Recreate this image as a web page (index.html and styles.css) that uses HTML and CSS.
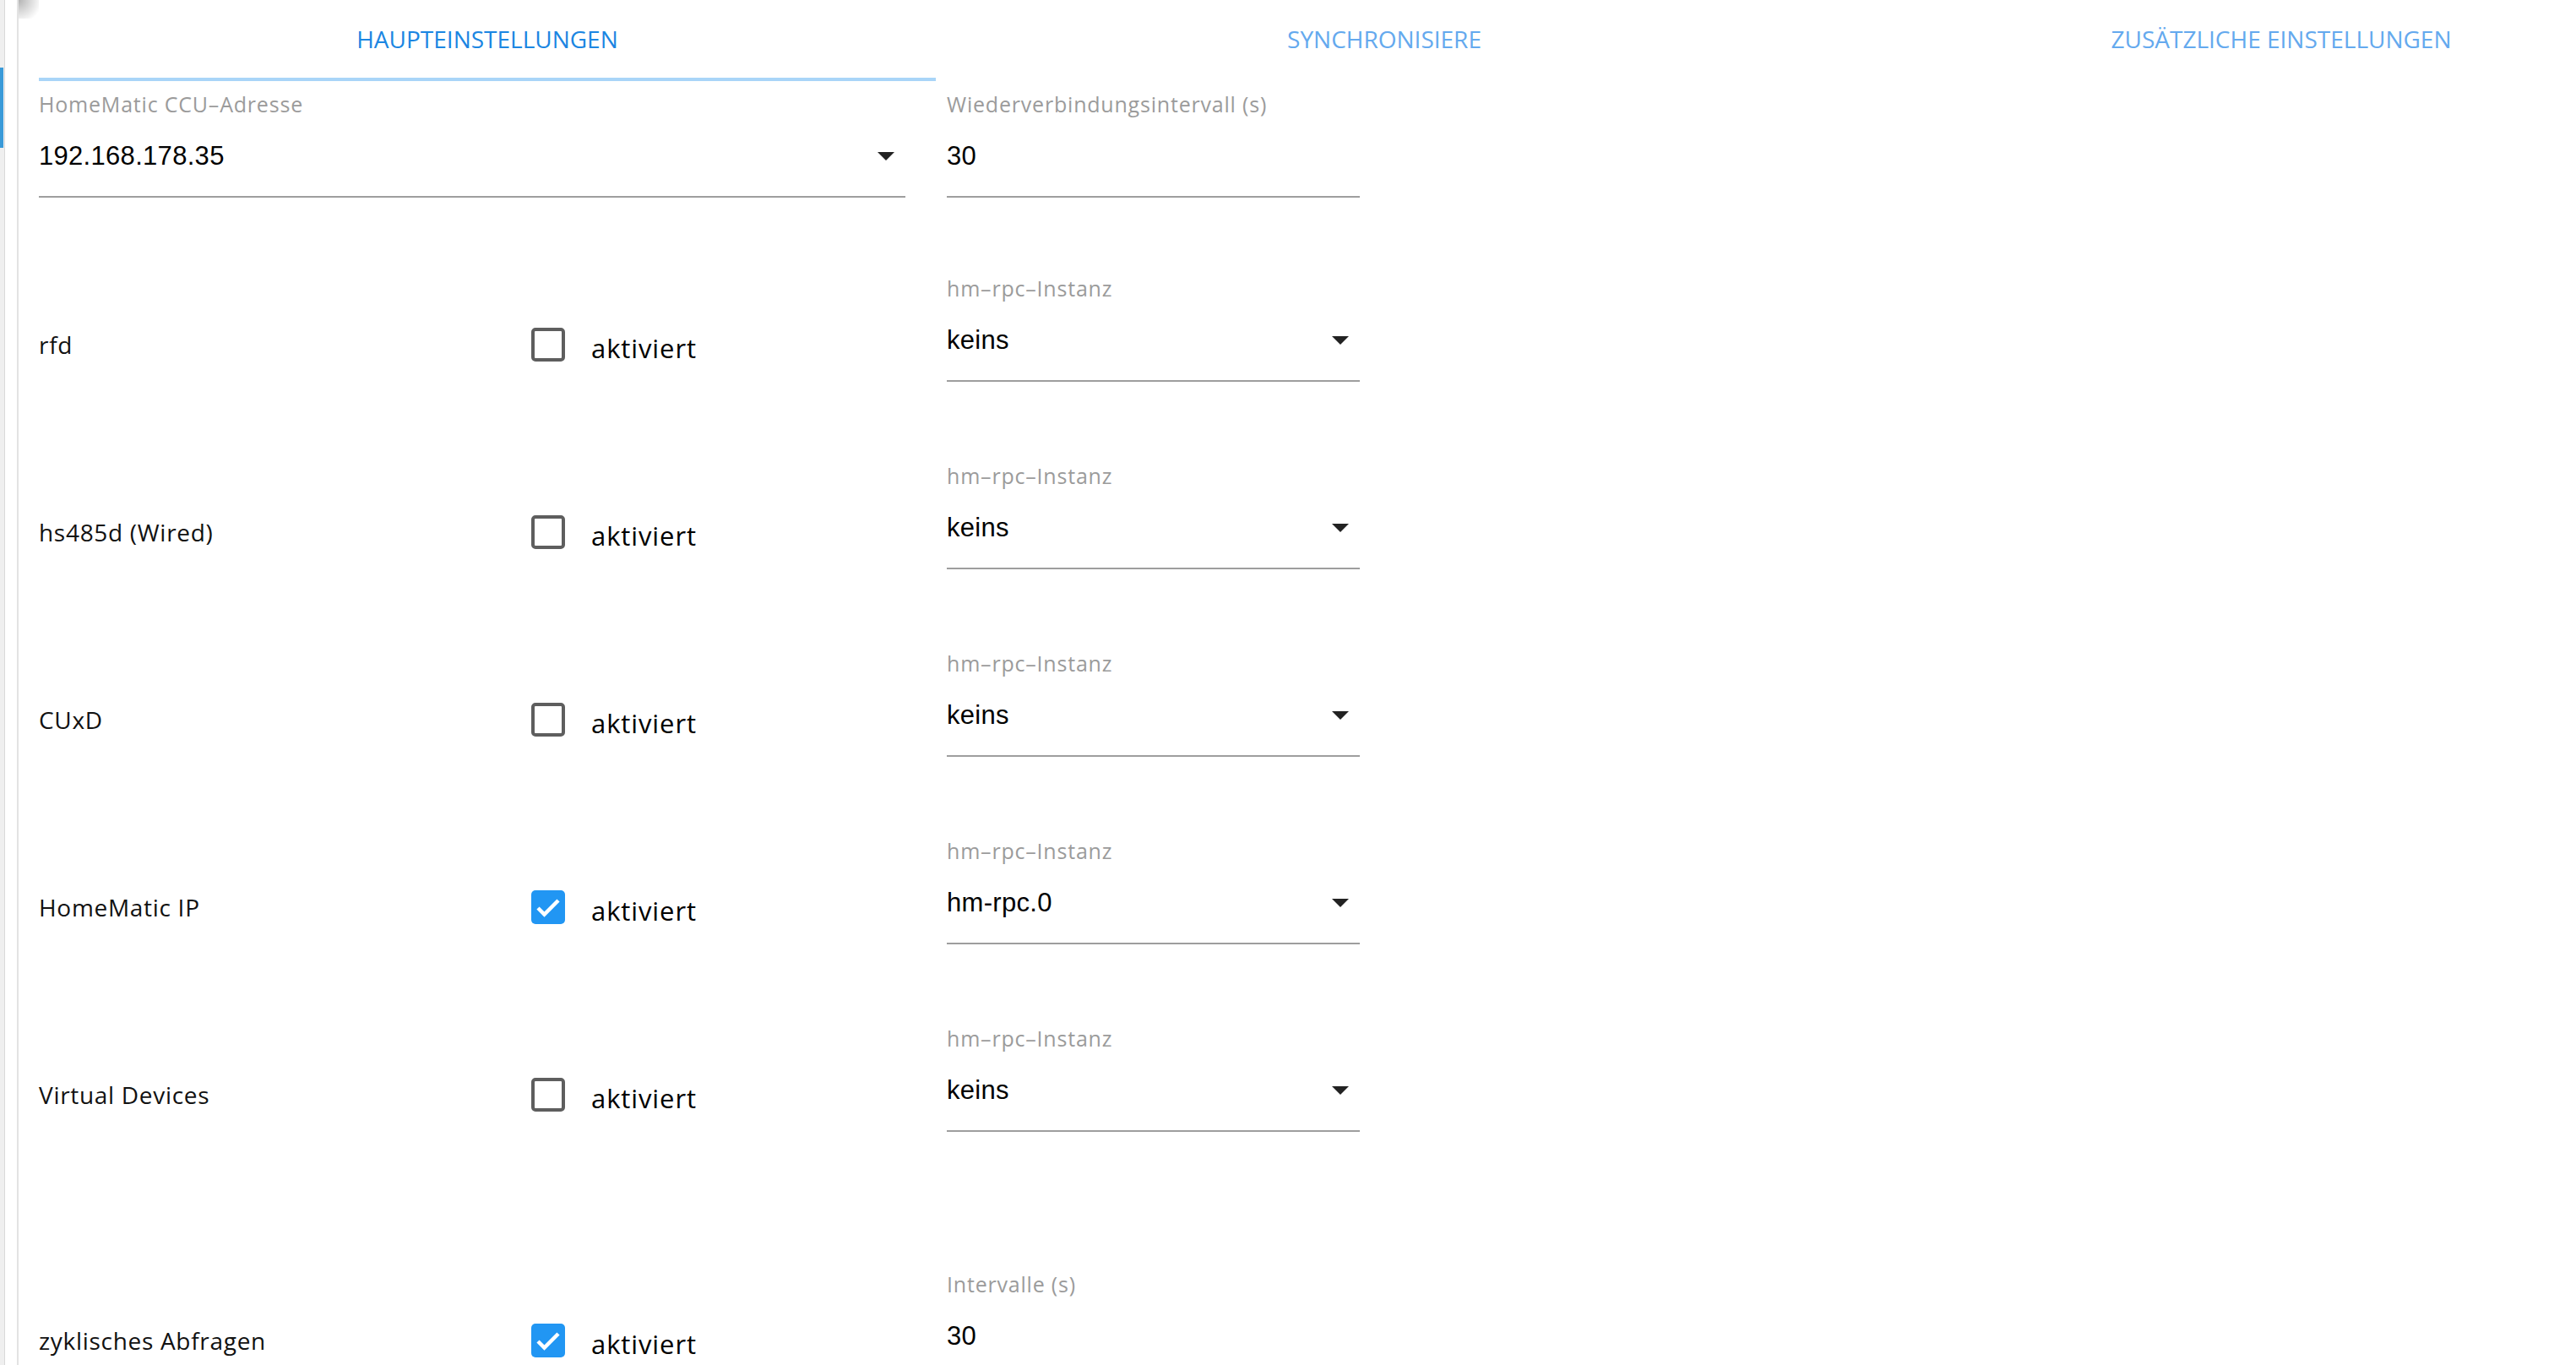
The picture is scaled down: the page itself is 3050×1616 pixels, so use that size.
FILE: index.html
```html
<!DOCTYPE html>
<html lang="de">
<head>
  <meta charset="UTF-8" />
  <meta name="viewport" content="width=device-width, initial-scale=1.0"/>
  <title>HomeMatic Einstellungen</title>
  <link rel="stylesheet" href="styles.css">
</head>
<body>

  <div class="app">
    <div class="rail"><span class="rail-marker"></span></div>

    <div class="panel">
      <span class="panel-shadow"></span>

      <div class="tabs">
        <div class="tab active">HAUPTEINSTELLUNGEN</div>
        <div class="tab">SYNCHRONISIERE</div>
        <div class="tab">ZUSÄTZLICHE EINSTELLUNGEN</div>
      </div>

      <div class="form">
        <div class="top-row">
          <div class="field">
            <div class="field-label">HomeMatic CCU–Adresse</div>
            <div class="field-input">
              <span>192.168.178.35</span>
              <svg class="arrow" viewBox="0 0 20 10"><path d="M0 0h20L10 10z"/></svg>
            </div>
          </div>
          <div class="field">
            <div class="field-label">Wiederverbindungsintervall (s)</div>
            <div class="field-input"><span>30</span></div>
          </div>
        </div>

        <div class="rows">
          <div class="row">
            <div class="row-name">rfd</div>
            <label class="row-check"><span class="box"></span><span class="check-text">aktiviert</span></label>
            <div class="field">
              <div class="field-label">hm–rpc–Instanz</div>
              <div class="field-input">
                <span>keins</span>
                <svg class="arrow" viewBox="0 0 20 10"><path d="M0 0h20L10 10z"/></svg>
              </div>
            </div>
          </div>

          <div class="row">
            <div class="row-name">hs485d (Wired)</div>
            <label class="row-check"><span class="box"></span><span class="check-text">aktiviert</span></label>
            <div class="field">
              <div class="field-label">hm–rpc–Instanz</div>
              <div class="field-input">
                <span>keins</span>
                <svg class="arrow" viewBox="0 0 20 10"><path d="M0 0h20L10 10z"/></svg>
              </div>
            </div>
          </div>

          <div class="row">
            <div class="row-name">CUxD</div>
            <label class="row-check"><span class="box"></span><span class="check-text">aktiviert</span></label>
            <div class="field">
              <div class="field-label">hm–rpc–Instanz</div>
              <div class="field-input">
                <span>keins</span>
                <svg class="arrow" viewBox="0 0 20 10"><path d="M0 0h20L10 10z"/></svg>
              </div>
            </div>
          </div>

          <div class="row">
            <div class="row-name">HomeMatic IP</div>
            <label class="row-check">
              <span class="box checked"><svg viewBox="0 0 40 40"><path d="M8 21l7.5 7.5L32 12"/></svg></span>
              <span class="check-text">aktiviert</span>
            </label>
            <div class="field">
              <div class="field-label">hm–rpc–Instanz</div>
              <div class="field-input">
                <span>hm-rpc.0</span>
                <svg class="arrow" viewBox="0 0 20 10"><path d="M0 0h20L10 10z"/></svg>
              </div>
            </div>
          </div>

          <div class="row">
            <div class="row-name">Virtual Devices</div>
            <label class="row-check"><span class="box"></span><span class="check-text">aktiviert</span></label>
            <div class="field">
              <div class="field-label">hm–rpc–Instanz</div>
              <div class="field-input">
                <span>keins</span>
                <svg class="arrow" viewBox="0 0 20 10"><path d="M0 0h20L10 10z"/></svg>
              </div>
            </div>
          </div>

          <div class="row row-last">
            <div class="row-name">zyklisches Abfragen</div>
            <label class="row-check">
              <span class="box checked"><svg viewBox="0 0 40 40"><path d="M8 21l7.5 7.5L32 12"/></svg></span>
              <span class="check-text">aktiviert</span>
            </label>
            <div class="field">
              <div class="field-label">Intervalle (s)</div>
              <div class="field-input"><span>30</span></div>
            </div>
          </div>
        </div>
      </div>
    </div>
  </div>

</body>
</html>
```

FILE: styles.css
```css
html, body {
  margin: 0;
  height: 100%;
  overflow: hidden;
}

body {
  font-family: "Open Sans", "Noto Sans", sans-serif;
  background: #fff;
  color: #111;
}

.app {
  display: flex;
  height: 100%;
}

/* linke Leiste */
.rail {
  position: relative;
  width: 5px;
  flex: none;
  background: #efefef;
  border-right: 1px solid #d9d9d9;
}

.rail-marker {
  position: absolute;
  left: 0;
  top: 80px;
  width: 4px;
  height: 95px;
  background: #3a9ad8;
}

.panel {
  position: relative;
  flex: 1;
  margin-left: 14px;
  border-left: 2px solid #e3e3e3;
  padding-left: 24px;
}

.panel-shadow {
  position: absolute;
  left: 0;
  top: 0;
  width: 24px;
  height: 22px;
  background: radial-gradient(circle at 0 0, #b4b4b4, rgba(255, 255, 255, 0) 85%);
}

/* Tabs */
.tabs {
  display: flex;
  width: 3186px;
}

.tab {
  flex: 0 0 1062px;
  height: 92px;
  display: flex;
  align-items: center;
  justify-content: center;
  font-size: 28px;
  color: #64a9ee;
  border-bottom: 4px solid transparent;
}

.tab.active {
  color: #1b86e2;
  border-bottom-color: #a9d5f8;
}

/* Formular */
.form {
  padding-top: 13px;
}

.top-row {
  display: grid;
  grid-template-columns: 1026px 489px;
  gap: 49px;
}

.field-label {
  font-size: 25px;
  line-height: 28px;
  letter-spacing: 0.8px;
  color: #9b9b9b;
  white-space: nowrap;
}

.field-input {
  display: flex;
  align-items: center;
  justify-content: space-between;
  padding: 28px 0 27px;
  line-height: 40px;
  font-family: "Liberation Sans", Arial, sans-serif;
  font-size: 31px;
  letter-spacing: 0.3px;
  color: #000;
  border-bottom: 2px solid #9e9e9e;
}

.arrow {
  width: 20px;
  height: 10px;
  margin-right: 13px;
  fill: #222;
}

.rows {
  display: flex;
  flex-direction: column;
  gap: 97px;
  margin-top: 93px;
}

.row {
  display: grid;
  grid-template-columns: 583px 492px 489px;
  align-items: start;
}

.row-last {
  margin-top: 69px;
}

.row-name,
.row-check {
  height: 40px;
  margin-top: 61px;
  display: flex;
  align-items: center;
}

.row-name {
  font-size: 28px;
  letter-spacing: 0.7px;
  padding-bottom: 3px;
}

.row-check {
  gap: 31px;
}

.check-text {
  font-size: 31px;
  letter-spacing: 0.9px;
  color: #000;
  padding-top: 7px;
}

.box {
  width: 40px;
  height: 40px;
  box-sizing: border-box;
  border: 4px solid #5e5e5e;
  border-radius: 5px;
}

.box.checked {
  border: none;
  background: #2196f3;
}

.box svg {
  display: block;
  width: 40px;
  height: 40px;
  fill: none;
  stroke: #fff;
  stroke-width: 4.5;
}
```
